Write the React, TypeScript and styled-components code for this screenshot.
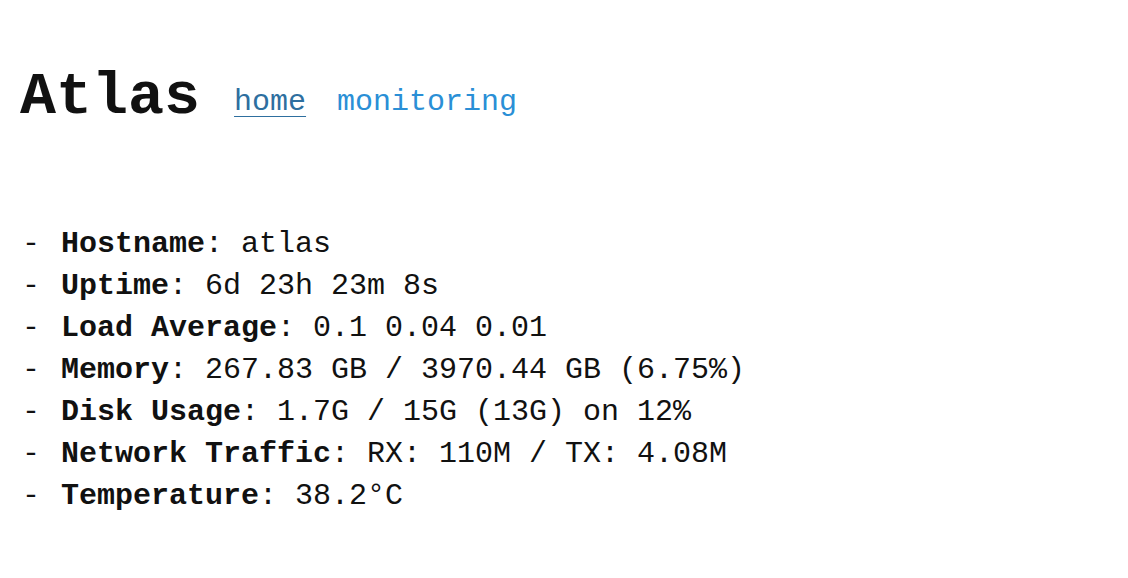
import React from "react";
import styled, { createGlobalStyle } from "styled-components";

const Global = createGlobalStyle`
  html, body { margin: 0; padding: 0; background: #ffffff; }
  body { font-family: "Liberation Mono", "DejaVu Sans Mono", monospace; color: #111; }
`;

const Page = styled.div`
  padding: 60px 20px 0 20px;
`;

const Header = styled.header`
  display: flex;
  align-items: baseline;
  gap: 34px;
`;

const Title = styled.h1`
  margin: 0;
  font-size: 60px;
  font-weight: 700;
  line-height: 74px;
  color: #111;
`;

const Nav = styled.nav`
  display: flex;
  align-items: baseline;
  gap: 31px;
`;

const NavLink = styled.a<{ $active?: boolean }>`
  font-size: 30px;
  color: ${(p) => (p.$active ? "#2e6f9f" : "#2a8fd6")};
  text-decoration: ${(p) => (p.$active ? "underline" : "none")};
  text-underline-offset: 6px;
  text-decoration-thickness: 1px;
  position: relative;
  top: -3px;
`;

const List = styled.ul`
  list-style: none;
  margin: 89px 0 0 0;
  padding: 0 0 0 2px;
  font-size: 30px;
  line-height: 42px;
`;

const Item = styled.li`
  white-space: pre;
`;

const Dash = styled.span`
  display: inline-block;
  width: 39px;
`;

const Label = styled.strong`
  font-weight: 700;
`;

const Value = styled.span`
  font-weight: 400;
`;

const rows: [string, string][] = [
  ["Hostname", "atlas"],
  ["Uptime", "6d 23h 23m 8s"],
  ["Load Average", "0.1 0.04 0.01"],
  ["Memory", "267.83 GB / 3970.44 GB (6.75%)"],
  ["Disk Usage", "1.7G / 15G (13G) on 12%"],
  ["Network Traffic", "RX: 110M / TX: 4.08M"],
  ["Temperature", "38.2°C"],
];

export default function App() {
  return (
    <>
      <Global />
      <Page>
        <Header>
          <Title>Atlas</Title>
          <Nav>
            <NavLink href="#" $active>
              home
            </NavLink>
            <NavLink href="#">monitoring</NavLink>
          </Nav>
        </Header>
        <List>
          {rows.map(([k, v]) => (
            <Item key={k}>
              <Dash>-</Dash>
              <Label>{k}</Label>
              <Value>{": " + v}</Value>
            </Item>
          ))}
        </List>
      </Page>
    </>
  );
}
